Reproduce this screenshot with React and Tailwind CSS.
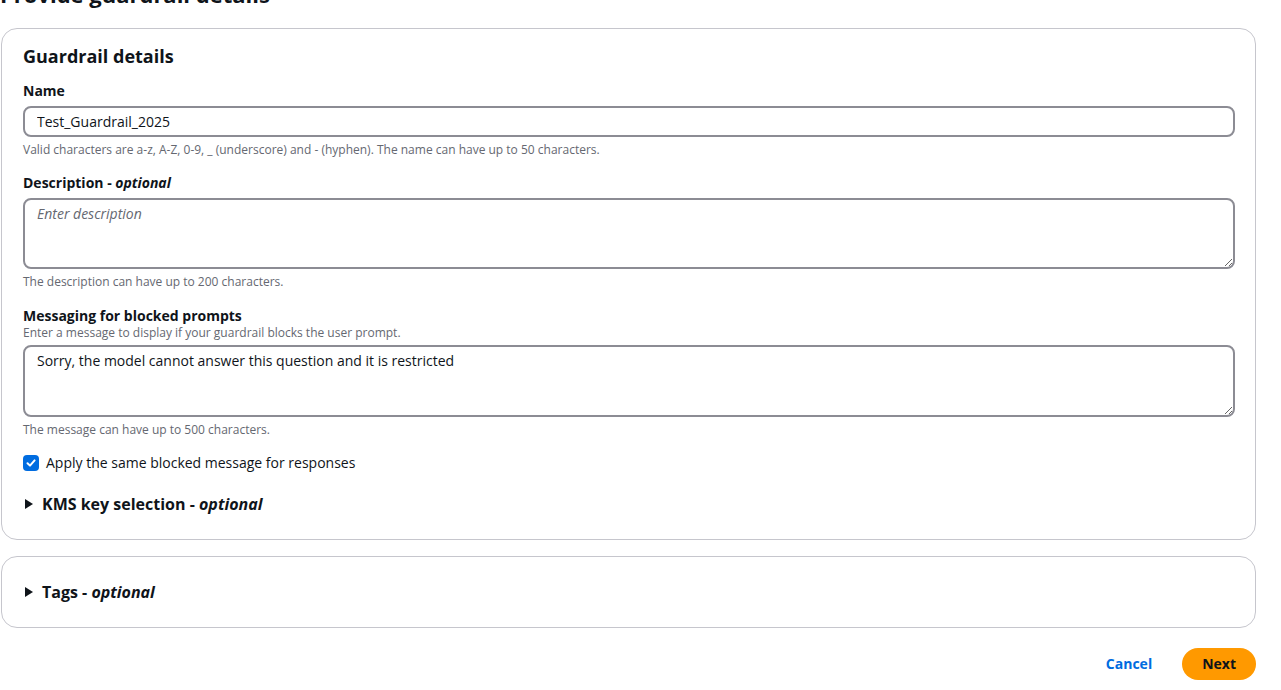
import React, { useState } from 'react';

const Field = ({ label, optional, sub, children, help, className = '' }) => (
  <div className={`flex flex-col ${className}`}>
    <label className="text-sm font-bold text-[#0f141a] leading-[22px]">
      {label}
      {optional && (
        <>
          {' - '}
          <i>optional</i>
        </>
      )}
    </label>
    {sub && <p className="text-xs text-[#656871] leading-4 -mt-[2px]">{sub}</p>}
    <div className="mt-[4px]">{children}</div>
    {help && <p className="text-xs text-[#656871] leading-4 mt-[5px]">{help}</p>}
  </div>
);

const Expander = ({ label }) => (
  <button className="flex items-center gap-[9px] text-base font-bold text-[#0f141a] leading-5">
    <svg width="8" height="10" viewBox="0 0 8 10" className="ml-[2px]">
      <path d="M0 0 L8 5 L0 10 Z" fill="#0f141a" />
    </svg>
    <span>
      {label} - <i>optional</i>
    </span>
  </button>
);

const App = () => {
  const [name, setName] = useState('Test_Guardrail_2025');
  const [desc, setDesc] = useState('');
  const [msg, setMsg] = useState('Sorry, the model cannot answer this question and it is restricted');
  const [same, setSame] = useState(true);

  return (
    <div className="w-[1281px] h-[690px] overflow-hidden bg-white text-[#0f141a]" style={{ fontFamily: '"Open Sans", "Noto Sans", sans-serif' }}>
      <div className="pl-[1px] pr-[25px]">
        <h1 className="text-[22px] font-bold leading-[28px] -mt-[20px] -ml-[1px]">Provide guardrail details</h1>

        <div className="mt-[20px] border border-[#c6c6cd] rounded-[16px] pl-[21px] pr-[20px] pt-[15px] pb-[25px]">
          <h2 className="text-lg font-bold leading-[24px]">Guardrail details</h2>

          <div className="mt-[12px] flex flex-col gap-[14px]">
            <Field label="Name" help="Valid characters are a-z, A-Z, 0-9, _ (underscore) and - (hyphen). The name can have up to 50 characters.">
              <input
                value={name}
                onChange={(e) => setName(e.target.value)}
                className="w-full h-[31px] border-2 border-[#8c8c94] rounded-[8px] px-[12px] text-sm text-[#0f141a] outline-none"
              />
            </Field>

            <Field label="Description" optional help="The description can have up to 200 characters.">
              <textarea
                value={desc}
                onChange={(e) => setDesc(e.target.value)}
                placeholder="Enter description"
                className="block w-full h-[71px] border-2 border-[#8c8c94] rounded-[8px] px-[12px] py-[3px] text-sm leading-[22px] placeholder:italic placeholder:text-[#656871] outline-none"
              />
            </Field>

            <Field
              className="mt-[1px]"
              label="Messaging for blocked prompts"
              sub="Enter a message to display if your guardrail blocks the user prompt."
              help="The message can have up to 500 characters."
            >
              <textarea
                value={msg}
                onChange={(e) => setMsg(e.target.value)}
                className="block w-full h-[72px] border-2 border-[#8c8c94] rounded-[8px] px-[12px] py-[3px] text-sm leading-[22px] outline-none"
              />
            </Field>
          </div>

          <label className="mt-[14px] flex items-center gap-[7px] text-sm leading-[22px] cursor-pointer">
            <span
              onClick={() => setSame(!same)}
              className={`w-[16px] h-[16px] rounded-[4px] flex items-center justify-center ${same ? 'bg-[#006ce0]' : 'border-2 border-[#8c8c94]'}`}
            >
              {same && (
                <svg width="12" height="12" viewBox="0 0 12 12">
                  <path d="M2.5 6.2 L5 8.6 L9.6 3.4" fill="none" stroke="white" strokeWidth="2" strokeLinecap="round" strokeLinejoin="round" />
                </svg>
              )}
            </span>
            Apply the same blocked message for responses
          </label>

          <div className="mt-[20px]">
            <Expander label="KMS key selection" />
          </div>
        </div>

        <div className="mt-[16px] border border-[#c6c6cd] rounded-[16px] pl-[21px] h-[72px] flex items-center">
          <Expander label="Tags" />
        </div>

        <div className="mt-[20px] flex justify-end items-center gap-[30px]">
          <button className="text-sm font-bold text-[#006ce0]">Cancel</button>
          <button className="h-[32px] px-[20px] rounded-full bg-[#ff9900] text-sm font-bold text-[#0f141a]">Next</button>
        </div>
      </div>
    </div>
  );
};

export default App;
